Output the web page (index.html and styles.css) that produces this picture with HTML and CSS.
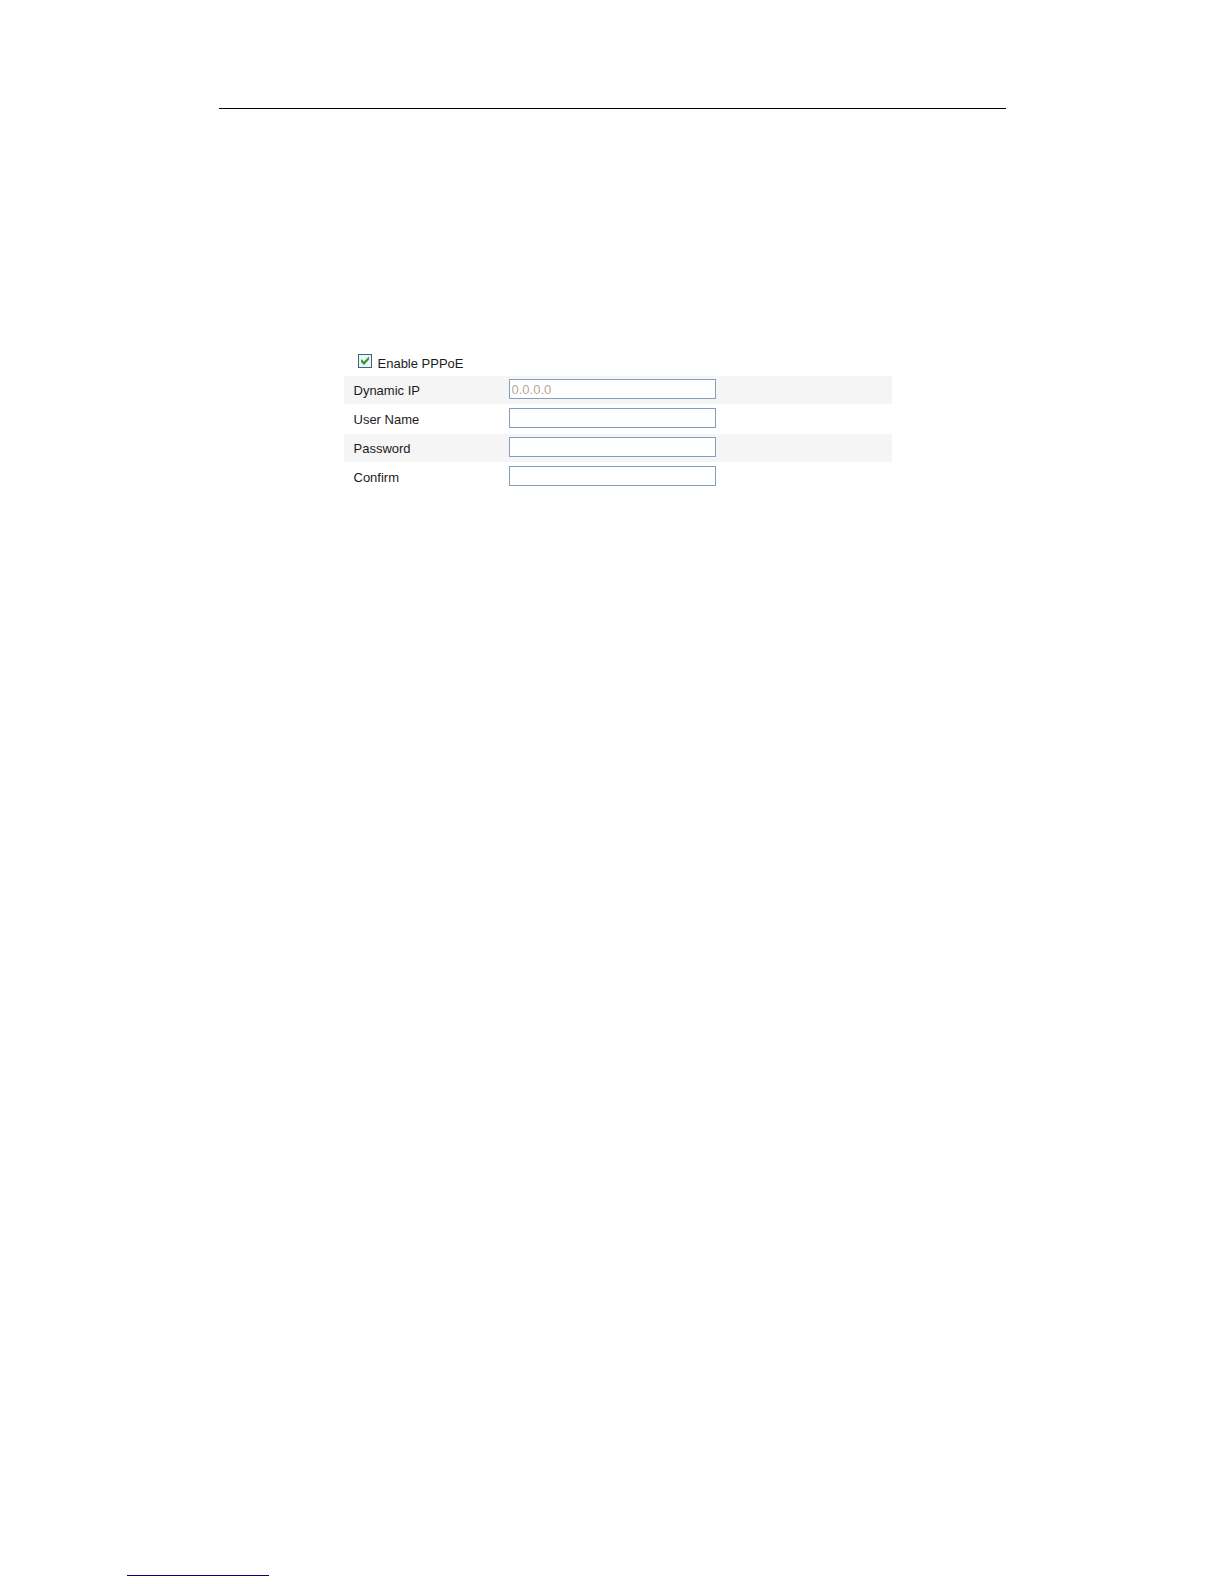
FILE: index.html
```html
<!DOCTYPE html>
<html lang="en">

<head>
     <meta charset="UTF-8">
     <meta name="viewport" content="width=device-width, initial-scale=1.0">
     <title>PPPoE</title>
     <link rel="stylesheet" href="styles.css">
</head>

<body>
     <main class="sheet">
          <hr class="top-rule">
          <form class="settings">
               <div class="enable-row">
                    <input type="checkbox" id="enablePppoe" checked>
                    <label for="enablePppoe">Enable PPPoE</label>
               </div>
               <div class="row shaded">
                    <label for="dynamicIp">Dynamic IP</label>
                    <input type="text" id="dynamicIp" value="0.0.0.0" disabled>
               </div>
               <div class="row">
                    <label for="userName">User Name</label>
                    <input type="text" id="userName">
               </div>
               <div class="row shaded">
                    <label for="password">Password</label>
                    <input type="password" id="password">
               </div>
               <div class="row">
                    <label for="confirm">Confirm</label>
                    <input type="password" id="confirm">
               </div>
          </form>
     </main>
     <footer class="page-footer">
          <hr class="footer-rule">
     </footer>
</body>

</html>
```
FILE: styles.css
```css
* {
     padding: 0;
     margin: 0;
     box-sizing: border-box;
}

body {
     min-height: 100vh;
     display: flex;
     flex-direction: column;
     background: white;
     color: #1c1c22;
     font-family: "Liberation Sans", Arial, sans-serif;
     font-size: 13px;
     line-height: 16px;
}

.sheet {
     width: 100%;
     max-width: 787px;
     margin: 0 auto;
     padding-top: 108px;
}

.top-rule {
     border: none;
     border-top: 1px solid black;
}

.settings {
     margin: 237px 114px 0 125px;
}

.settings label {
     padding-top: 2px;
}

.enable-row {
     display: flex;
     align-items: center;
     gap: 6px;
     height: 30px;
     padding: 4px 0 0 14px;
}

/* square box with a green tick */
.enable-row input {
     appearance: none;
     width: 14px;
     height: 14px;
     margin-bottom: 4px;
     border: 1px solid #3a6390;
     background: #f1f3ef url("data:image/svg+xml,%3Csvg xmlns='http://www.w3.org/2000/svg' viewBox='0 0 12 12'%3E%3Cpath d='M2 4L5 6.500L10 1.500V4.500L5 10L2 7Z' fill='%2328a035'/%3E%3C/svg%3E") center / 12px 12px no-repeat;
}

.enable-row input:not(:checked) {
     background-image: none;
}

.row {
     display: flex;
     align-items: center;
     height: 30px;
     padding-left: 10px;
}

.row.shaded {
     height: 28px;
     background: #f5f5f5;
}

.row label {
     width: 155px;
}

.row input {
     width: 207px;
     height: 20px;
     margin-bottom: 2px;
     padding: 0 2px;
     border: 1px solid #869dbd;
     background: white;
     color: #1c1c22;
     font: inherit;
}

.row input:disabled {
     color: #b5aa98;
}

.page-footer {
     margin-top: auto;
     padding: 0 0 8px 127px;
}

.footer-rule {
     width: 142px;
     border: none;
     border-top: 1px solid #000080;
}
```
